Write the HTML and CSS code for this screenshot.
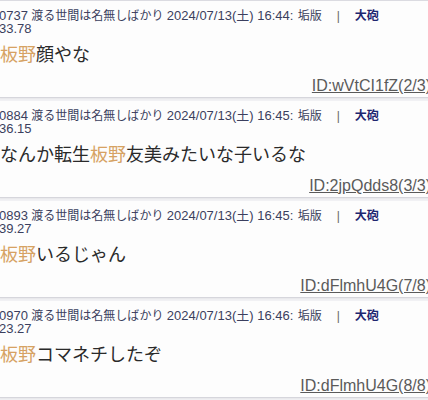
FILE: index.html
```html
<!DOCTYPE html>
<html lang="ja">
<head>
    <meta charset="UTF-8">
    <meta name="viewport" content="width=device-width, initial-scale=1.0">
    <title>スレッド</title>
    <link rel="stylesheet" href="styles.css">
</head>
<body>

    <div class="thread">
        <div class="post">
            <div class="post-head">
                <span class="num">0737</span> <span class="name">渡る世間は名無しばかり</span> <span class="date">2024/07/13(土) 16:44:</span> <span class="tag">垢版</span><span class="sep">|</span><span class="gun">大砲</span>
            </div>
            <div class="post-head"><span class="num">33.78</span></div>
            <p class="post-body"><span class="hl">板野</span>顔やな</p>
            <div class="post-id"><a href="#">ID:wVtCI1fZ(2/3)</a></div>
        </div>

        <div class="post">
            <div class="post-head">
                <span class="num">0884</span> <span class="name">渡る世間は名無しばかり</span> <span class="date">2024/07/13(土) 16:45:</span> <span class="tag">垢版</span><span class="sep">|</span><span class="gun">大砲</span>
            </div>
            <div class="post-head"><span class="num">36.15</span></div>
            <p class="post-body">なんか転生<span class="hl">板野</span>友美みたいな子いるな</p>
            <div class="post-id"><a href="#">ID:2jpQdds8(3/3)</a></div>
        </div>

        <div class="post">
            <div class="post-head">
                <span class="num">0893</span> <span class="name">渡る世間は名無しばかり</span> <span class="date">2024/07/13(土) 16:45:</span> <span class="tag">垢版</span><span class="sep">|</span><span class="gun">大砲</span>
            </div>
            <div class="post-head"><span class="num">39.27</span></div>
            <p class="post-body"><span class="hl">板野</span>いるじゃん</p>
            <div class="post-id"><a href="#">ID:dFlmhU4G(7/8)</a></div>
        </div>

        <div class="post">
            <div class="post-head">
                <span class="num">0970</span> <span class="name">渡る世間は名無しばかり</span> <span class="date">2024/07/13(土) 16:46:</span> <span class="tag">垢版</span><span class="sep">|</span><span class="gun">大砲</span>
            </div>
            <div class="post-head"><span class="num">23.27</span></div>
            <p class="post-body"><span class="hl">板野</span>コマネチしたぞ</p>
            <div class="post-id"><a href="#">ID:dFlmhU4G(8/8)</a></div>
        </div>
    </div>

</body>
</html>
```

FILE: styles.css
```css
body {
    margin: 0;
    font-family: 'Liberation Sans', 'Noto Sans CJK JP', sans-serif;
    background-color: #f3f3f6;
    overflow: hidden;
}
.thread {
    margin: 0 -3px 0 -1px;
    border-top: 1px solid #dcdce2;
}
.post {
    height: 97px;
    padding: 8px 0 0 0;
    margin-bottom: 3px;
    background-color: #fdfdfd;
    border-bottom: 1px solid #d6d6dc;
    box-sizing: border-box;
    box-shadow: 0 1px 2px rgba(0, 0, 0, 0.06);
}
.post-head {
    font-size: 12px;
    line-height: 13px;
    height: 13px;
    color: #3b3f5e;
    white-space: nowrap;
}
.post-head .num,
.post-head .date {
    font-size: 13px;
    line-height: 13px;
}
.post-head .tag {
    margin-left: 1px;
}
.post-head .sep {
    color: #666;
    margin: 0 15px 0 15px;
}
.post-head .gun {
    font-weight: bold;
    color: #1d2670;
}
.post-body {
    margin: 7px 0 0 1px;
    font-size: 18px;
    line-height: 26px;
    color: #2a2a2a;
}
.hl {
    color: #d6a263;
}
.post-id {
    margin-top: 9px;
    text-align: right;
    font-size: 16px;
    line-height: 18px;
}
.post-id a {
    color: #5a5a5a;
    text-decoration: underline;
}
```
